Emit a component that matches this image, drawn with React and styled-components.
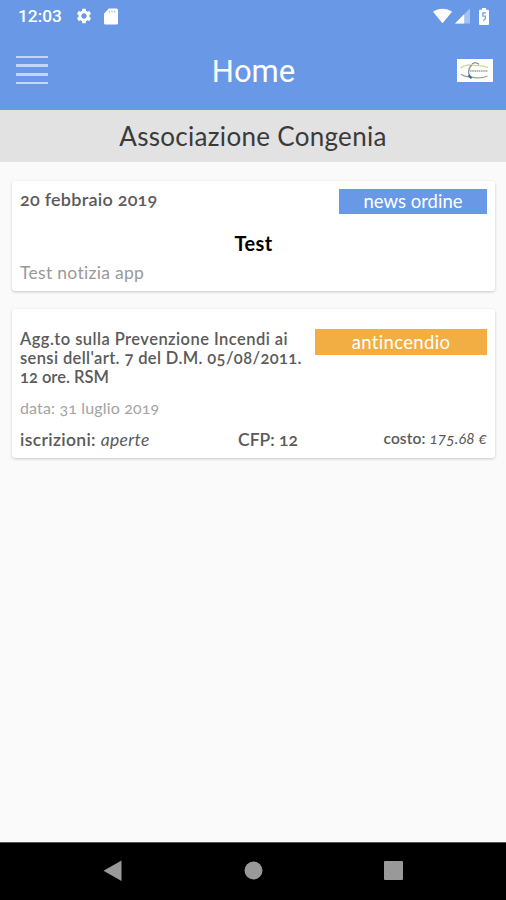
import React from 'react';
import styled, { createGlobalStyle, css } from 'styled-components';
import { MdSettings } from 'react-icons/md';

const GlobalStyle = createGlobalStyle`
  * {
    box-sizing: border-box;
  }
  body {
    margin: 0;
    background: #fafafa;
  }
`;

const Screen = styled.div`
  display: flex;
  flex-direction: column;
  width: 506px;
  height: 900px;
  overflow: hidden;
  background: #fafafa;
  color: #5a5a5a;
  font-family: Lato, 'Open Sans', sans-serif;
  font-variant-numeric: oldstyle-nums;
  white-space: nowrap;
`;

const StatusBar = styled.div`
  display: flex;
  align-items: center;
  flex: none;
  height: 32px;
  padding: 0 17px 0 18px;
  background: #6998e6;
  color: #fff;
`;

const Clock = styled.div`
  width: 57px;
  font: 500 17.3px Roboto, sans-serif;
  font-variant-numeric: lining-nums;
`;

const StatusIcons = styled.div`
  display: flex;
  align-items: center;
  gap: ${props => props.gap}px;
  ${props => props.right && css`
    margin-left: auto;
    margin-right: 9px;
  `}
  svg {
    display: block;
  }
`;

const Header = styled.div`
  display: flex;
  align-items: center;
  justify-content: space-between;
  flex: none;
  height: 78px;
  padding: 0 13px 2px 16px;
  background: #6998e6;
`;

const HeaderSide = styled.div`
  display: flex;
  width: 38px;
  justify-content: ${props => props.right ? 'flex-end' : 'flex-start'};
`;

const MenuButton = styled.div`
  display: flex;
  flex-direction: column;
  justify-content: space-between;
  width: 32px;
  height: 28px;
`;

const MenuLine = styled.div`
  height: ${props => props.thin ? 2 : 3}px;
  background: #c3d6f6;
`;

const HeaderTitle = styled.div`
  font: 400 31px Roboto, sans-serif;
  color: #fff;
  padding: 3px 2px 0 0;
`;

const Subtitle = styled.div`
  display: flex;
  align-items: center;
  justify-content: center;
  flex: none;
  height: 52px;
  padding-bottom: 1px;
  background: #e2e2e2;
  color: #3a3a3a;
  font-size: 26px;
  font-weight: 400;
  letter-spacing: 0.3px;
`;

const List = styled.div`
  flex: 1;
  display: flex;
  flex-direction: column;
  gap: 18px;
  padding: 19px 11px 0 12px;
`;

const Card = styled.div`
  height: ${props => props.height}px;
  padding: ${props => props.top}px 8px 0;
  background: #fff;
  border-radius: 3px;
  box-shadow: 0 1px 3px rgba(0, 0, 0, 0.2);
`;

const CardHead = styled.div`
  display: flex;
  justify-content: space-between;
  align-items: flex-start;
`;

const Day = styled.div`
  font-size: 18px;
  font-weight: 600;
  line-height: 20px;
  letter-spacing: 0.25px;
`;

const Tag = styled.div`
  width: ${props => props.width}px;
  height: ${props => props.height}px;
  line-height: ${props => props.height}px;
  background: ${props => props.color};
  color: #fff;
  font-size: 18.5px;
  letter-spacing: ${props => props.spacing}px;
  text-align: center;
`;

const NewsTitle = styled.div`
  margin-top: 17px;
  color: #000;
  font-size: 20px;
  font-weight: 700;
  line-height: 24px;
  letter-spacing: 0.4px;
  text-align: center;
`;

const NewsText = styled.div`
  margin-top: 8px;
  color: #999;
  font-size: 17.5px;
  line-height: 20px;
  letter-spacing: 0.3px;
`;

const CourseTitle = styled.div`
  padding-top: 1px;
  font-size: 16.5px;
  font-weight: 600;
  line-height: 19px;
`;

const CourseLine = styled.div`
  letter-spacing: ${props => props.spacing}px;
`;

const CourseDate = styled.div`
  margin-top: 11px;
  color: #a3a3a3;
  font-size: 16px;
  line-height: 20px;
  letter-spacing: 0.15px;
`;

const CourseInfo = styled.div`
  display: flex;
  align-items: flex-start;
  margin-top: 11px;
  line-height: 22px;
`;

const Info = styled.div`
  width: ${props => props.width};
  font-size: ${props => props.size}px;
  font-weight: 600;
  letter-spacing: ${props => props.spacing}px;
  ${props => props.right && css`
    margin-left: auto;
    line-height: 19px;
  `}
  em {
    font-weight: 400;
  }
`;

const NavBar = styled.div`
  display: flex;
  align-items: center;
  justify-content: space-between;
  flex: none;
  height: 58px;
  padding: 0 103px 2px;
  background: #000;
  border-top: 1px solid #555;
`;

const SdIcon = () => (
  <svg width="14" height="17" viewBox="0 0 14 17">
    <path d="M5 0.5h7.5A1.5 1.5 0 0 1 14 2v13a1.5 1.5 0 0 1-1.5 1.5h-11A1.5 1.5 0 0 1 0 15V5.5z" fill="#fff" />
    <path d="M5.4 2.4v2.4M8 2.4v2.4M10.6 2.4v2.4" stroke="#b4cbf3" strokeWidth="1.3" />
  </svg>
);

const WifiIcon = () => (
  <svg width="19" height="16" viewBox="0 0 20 16">
    <path d="M0 3.6C5.6-0.7 14.4-0.7 20 3.6L10 15.6z" fill="#fff" />
  </svg>
);

const SignalIcon = () => (
  <svg width="15" height="16" viewBox="0 0 15 16">
    <path d="M15 0.5v15H0z" fill="#a5c1f0" />
    <path d="M9.2 6.3v9.2H0z" fill="#fff" />
  </svg>
);

const BatteryIcon = () => (
  <svg width="10" height="17" viewBox="0 0 10 17">
    <path d="M3 0h4v1.7h2a1 1 0 0 1 1 1V16a1 1 0 0 1-1 1H1a1 1 0 0 1-1-1V2.7a1 1 0 0 1 1-1h2z" fill="#fff" />
    <path d="M6.8 5H3.8v3.2h2.6v2.4L4.4 12.8" fill="none" stroke="#7ba3e8" strokeWidth="1.3" />
  </svg>
);

// logo associazione
const Logo = () => (
  <svg width="36" height="23" viewBox="0 0 36 23">
    <rect width="36" height="23" fill="#fdfefb" />
    <path d="M3.5 9C8 5.3 12 5.8 17 6.4S26 5.8 31 8.6" fill="none" stroke="#cfdc84" strokeWidth="1.3" />
    <path d="M15 5.2C17 3.4 20 3.4 22 5.4" fill="none" stroke="#777f77" strokeWidth="1.1" />
    <path d="M14.8 6C10.5 9.5 10.7 16 14.6 19" fill="none" stroke="#8192ad" strokeWidth="1.2" />
    <path d="M4 15.2C8 18.3 12 17.6 16 18.4S25 19.6 30.5 17" fill="none" stroke="#9aa48b" strokeWidth="1.2" />
    <path d="M11.5 16.3L14.5 19.3" stroke="#2f6f9b" strokeWidth="2" />
    <path d="M13 12H31" stroke="#9b9fa9" strokeWidth="1.6" strokeDasharray="1.6 0.6" />
  </svg>
);

function App() {
  return (
    <Screen>
      <GlobalStyle />
      <StatusBar>
        <Clock>12:03</Clock>
        <StatusIcons gap={11}>
          <MdSettings size={18} />
          <SdIcon />
        </StatusIcons>
        <StatusIcons gap={3} right>
          <WifiIcon />
          <SignalIcon />
        </StatusIcons>
        <StatusIcons gap={0}>
          <BatteryIcon />
        </StatusIcons>
      </StatusBar>

      <Header>
        <HeaderSide>
          <MenuButton>
            <MenuLine thin />
            <MenuLine />
            <MenuLine />
            <MenuLine thin />
          </MenuButton>
        </HeaderSide>
        <HeaderTitle>Home</HeaderTitle>
        <HeaderSide right>
          <Logo />
        </HeaderSide>
      </Header>

      <Subtitle>Associazione Congenia</Subtitle>

      <List>
        {/* news */}
        <Card height={110} top={8}>
          <CardHead>
            <Day>20 febbraio 2019</Day>
            <Tag width={148} height={25} spacing={0} color="#6998e6">news ordine</Tag>
          </CardHead>
          <NewsTitle>Test</NewsTitle>
          <NewsText>Test notizia app</NewsText>
        </Card>

        {/* corso */}
        <Card height={149} top={20}>
          <CardHead>
            <CourseTitle>
              <CourseLine spacing={0.45}>Agg.to sulla Prevenzione Incendi ai</CourseLine>
              <CourseLine spacing={0.38}>sensi dell'art. 7 del D.M. 05/08/2011.</CourseLine>
              <CourseLine spacing={0}>12 ore. RSM</CourseLine>
            </CourseTitle>
            <Tag width={172} height={26} spacing={0.35} color="#f2ae43">antincendio</Tag>
          </CardHead>
          <CourseDate>data: 31 luglio 2019</CourseDate>
          <CourseInfo>
            <Info width="218px" size={17.5} spacing={0.35}>iscrizioni: <em>aperte</em></Info>
            <Info width="auto" size={17.5} spacing={0}>CFP: 12</Info>
            <Info width="auto" size={15.5} spacing={0.1} right>costo: <em>175.68 €</em></Info>
          </CourseInfo>
        </Card>
      </List>

      <NavBar>
        <svg width="19" height="22" viewBox="0 0 19 22">
          <path d="M18.5 0.5v20.5L0.5 10.8z" fill="#999" />
        </svg>
        <svg width="19" height="19" viewBox="0 0 19 19">
          <circle cx="9.5" cy="9.5" r="9" fill="#999" />
        </svg>
        <svg width="19" height="19" viewBox="0 0 19 19">
          <rect width="19" height="19" rx="1" fill="#999" />
        </svg>
      </NavBar>
    </Screen>
  );
}

export default App;
